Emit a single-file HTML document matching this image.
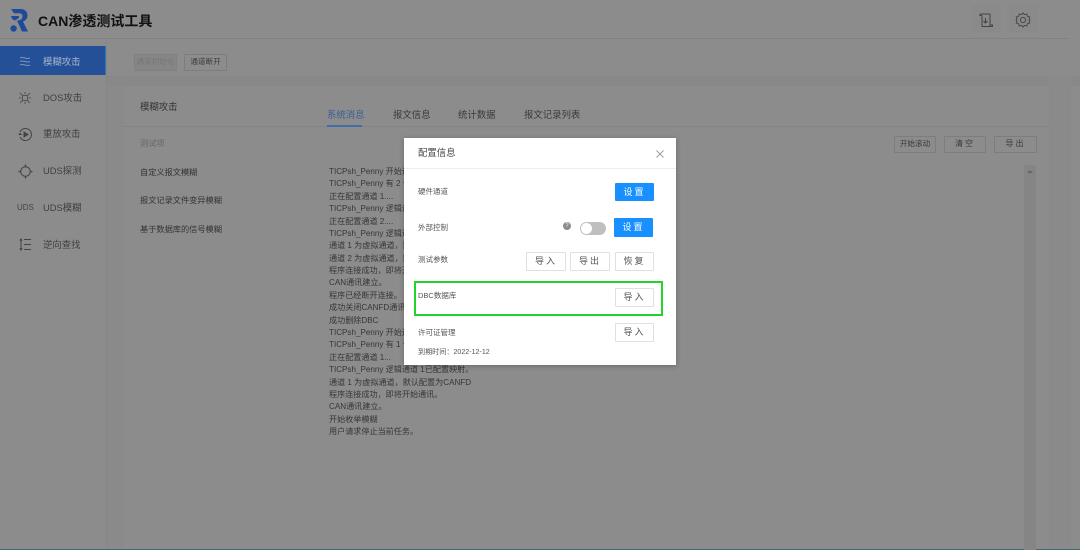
<!DOCTYPE html>
<html lang="zh"><head><meta charset="utf-8"><title>CAN渗透测试工具</title>
<style>
html,body{margin:0;padding:0}
body{width:1080px;height:550px;overflow:hidden;position:relative;background:#8c8c8c;font-family:"Liberation Sans","Noto Sans CJK SC",sans-serif;color:#3a3a3a}
div,span{position:absolute;white-space:nowrap;box-sizing:border-box}
#w{left:0;top:0;width:1080px;height:550px;filter:blur(.35px)}
.b{border:1px solid #7d7d7d;border-radius:1px;text-align:center;color:#3a3a3a;font-size:8px;line-height:14px;height:17px}
.nav{left:43px;font-size:9.4px;line-height:14px;color:#3f3f3f}
.item{left:140px;font-size:8.2px;line-height:12px;color:#333}
.tab{top:108px;font-size:9.4px;line-height:14px;color:#3a3a3a}
.log{left:329px;font-size:8.1px;line-height:12px;color:#363636}
.lab{left:14px;font-size:7.5px;line-height:10px;color:#555}
.mb{width:39px;height:19px;background:#fff;border:1px solid #e0e0e0;border-radius:1px;font-size:9px;line-height:17px;text-align:center;color:#555;letter-spacing:2px}
.pri{background:#1890ff;border-color:#1890ff;color:#fff}
</style></head><body><div id="w">
<!-- backgrounds -->
<div style="left:0;top:38px;width:1070px;height:1px;background:#828282"></div>
<div style="left:106px;top:39px;width:1px;height:511px;background:#878787"></div>
<div style="left:107px;top:76px;width:973px;height:10px;background:#888"></div>
<div style="left:107px;top:86px;width:17px;height:464px;background:#8a8a8a"></div>
<div style="left:1049px;top:76px;width:22px;height:474px;background:#8a8a8a"></div>
<div style="left:124px;top:126px;width:925px;height:1px;background:#838383"></div>
<div style="left:0;top:549px;width:1080px;height:1px;background:#3f6a7c"></div>

<!-- logo -->
<svg style="position:absolute;left:9px;top:7px" width="20" height="26" viewBox="0 0 20 26">
<path d="M2 2H11C16.5 2 18.5 5 18.5 8.5C18.5 11.5 16.5 13.5 14 14.5L19 24.5H13L8 13.5C11.5 13.5 13.5 12 13.5 9C13.5 7 12 6.2 10 6.2H5Z" fill="#1f4a9c"/>
<path d="M2 9H9C10.5 9 10.5 11 9 11.5L6 13.5C4 13 2.5 11.5 2 9Z" fill="#1f4a9c"/>
<circle cx="4.6" cy="21.5" r="3.2" fill="#1f4a9c"/></svg>
<div style="left:38px;top:12px;font-size:14px;line-height:18px;font-weight:bold;color:#111">CAN渗透测试工具</div>

<!-- top right icons -->
<div style="left:972px;top:5px;width:29px;height:28px;background:#8a8a8a"></div>
<div style="left:1009px;top:5px;width:29px;height:28px;background:#8a8a8a"></div>
<svg style="position:absolute;left:979px;top:13px" width="15" height="15" viewBox="0 0 15 15" fill="none" stroke="#444" stroke-width="1">
<path d="M1 1H11V13.5H3V2.5M1 1V2.5H3M11 12H13.5V13.5H11M6.5 5V10M4.5 8L6.5 10L8.5 8"/></svg>
<svg style="position:absolute;left:1015px;top:12px" width="16" height="16" viewBox="0 0 16 16" fill="none" stroke="#4a4a4a" stroke-width="1">
<path d="M8 1L9.5 2.6L11.8 2.1L12.5 4.3L14.7 5L14.1 7.2L15 8L14.1 9.2L14.7 11L12.5 11.7L11.8 13.9L9.5 13.4L8 15L6.5 13.4L4.2 13.9L3.5 11.7L1.3 11L1.9 9.2L1 8L1.9 7.2L1.3 5L3.5 4.3L4.2 2.1L6.5 2.6Z"/><circle cx="8" cy="8" r="2.6"/></svg>

<!-- sidebar -->
<div style="left:0;top:46px;width:106px;height:29px;background:#245098;border-right:1px solid #2a78b8"></div>
<svg style="position:absolute;left:19px;top:56px" width="12" height="11" viewBox="0 0 12 11" fill="none" stroke="#7f93b4" stroke-width="1"><path d="M1 2Q3 1 6 2T11 2M1 5.5Q3 4.5 6 5.5T11 5.5M1 9Q3 8 6 9T11 9"/></svg>
<div class="nav" style="top:55px;color:#a9b6cc">模糊攻击</div>
<svg style="position:absolute;left:19px;top:92px" width="12" height="12" viewBox="0 0 12 12" fill="none" stroke="#555" stroke-width="1"><rect x="3.5" y="3.5" width="5" height="5"/><path d="M6 0V2.4M6 9.6V12M0 6H2.4M9.6 6H12M1 1L3.5 3.5M8.5 8.5L11 11M11 1L8.5 3.5M3.5 8.5L1 11"/></svg>
<div class="nav" style="top:91px">DOS攻击</div>
<svg style="position:absolute;left:18px;top:127px" width="15" height="15" viewBox="0 0 15 15" fill="none" stroke="#444" stroke-width="1"><path d="M2 5A6 6 0 1 1 2 10"/><path d="M0.5 7.5H4M2.5 6L1 7.5"/><path d="M6 5L10 7.5L6 10Z" fill="#444"/></svg>
<div class="nav" style="top:127px">重放攻击</div>
<svg style="position:absolute;left:18px;top:164px" width="15" height="15" viewBox="0 0 15 15" fill="none" stroke="#444" stroke-width="1"><circle cx="7.5" cy="7.5" r="4.8"/><path d="M7.5 0.5V3M7.5 12V14.5M0.5 7.5H3M12 7.5H14.5" stroke-width="1.3"/></svg>
<div class="nav" style="top:164px">UDS探测</div>
<div style="left:17px;top:203px;font-size:8px;line-height:10px;color:#444">UDS</div>
<div class="nav" style="top:201px">UDS模糊</div>
<svg style="position:absolute;left:19px;top:238px" width="12" height="13" viewBox="0 0 12 13" fill="none" stroke="#444" stroke-width="1"><path d="M5 1.5H12M5 6.5H12M5 11.5H12M2 1V12"/><path d="M0.8 2.6L2 1L3.2 2.6M0.8 10.4L2 12L3.2 10.4"/></svg>
<div class="nav" style="top:238px">逆向查找</div>

<!-- toolbar -->
<div class="b" style="left:134px;top:54px;width:43px;color:#767676;border-color:#808080;background:#868686;font-size:7.6px">通道初始化</div>
<div class="b" style="left:184px;top:54px;width:43px;font-size:7.6px">通道断开</div>

<!-- card -->
<div style="left:140px;top:100px;font-size:9.4px;line-height:14px;color:#333">模糊攻击</div>
<div class="tab" style="left:327px;color:#3b5f96">系统消息</div>
<div style="left:327px;top:125px;width:35px;height:2px;background:#3d6ea8"></div>
<div class="tab" style="left:393px">报文信息</div>
<div class="tab" style="left:458px">统计数据</div>
<div class="tab" style="left:524px">报文记录列表</div>
<div class="item" style="left:140px;top:138px;color:#666">测试项</div>
<div class="item" style="top:167px">自定义报文模糊</div>
<div class="item" style="top:195px">报文记录文件变异模糊</div>
<div class="item" style="top:224px">基于数据库的信号模糊</div>

<div class="b" style="left:894px;top:136px;width:42px;font-size:7.6px">开始滚动</div>
<div class="b" style="left:944px;top:136px;width:42px;letter-spacing:2px">清空</div>
<div class="b" style="left:994px;top:136px;width:43px;letter-spacing:2px">导出</div>

<!-- scrollbar -->
<div style="left:1024px;top:165px;width:12px;height:385px;background:#858585"></div>
<div style="left:1027px;top:170px;width:0;height:0;border:3px solid transparent;border-bottom:3px solid #666;border-top:0"></div>

<!-- log -->
<div class="log" style="top:166px">TICPsh_Penny 开始运行</div>
<div class="log" style="top:178.4px">TICPsh_Penny 有 2 个通道</div>
<div class="log" style="top:190.8px">正在配置通道 1....</div>
<div class="log" style="top:203.1px">TICPsh_Penny 逻辑通道</div>
<div class="log" style="top:215.5px">正在配置通道 2....</div>
<div class="log" style="top:227.9px">TICPsh_Penny 逻辑通道</div>
<div class="log" style="top:240.3px">通道 1 为虚拟通道&#xFF0C;默认</div>
<div class="log" style="top:252.7px">通道 2 为虚拟通道&#xFF0C;默认</div>
<div class="log" style="top:265px">程序连接成功&#xFF0C;即将开始</div>
<div class="log" style="top:277.4px">CAN通讯建立。</div>
<div class="log" style="top:289.8px">程序已经断开连接。</div>
<div class="log" style="top:302.2px">成功关闭CANFD通讯</div>
<div class="log" style="top:314.6px">成功删除DBC</div>
<div class="log" style="top:326.9px">TICPsh_Penny 开始运行</div>
<div class="log" style="top:339.3px">TICPsh_Penny 有 1 个通道</div>
<div class="log" style="top:351.7px">正在配置通道 1...</div>
<div class="log" style="top:364.1px">TICPsh_Penny 逻辑通道 1已配置映射。</div>
<div class="log" style="top:376.5px">通道 1 为虚拟通道&#xFF0C;默认配置为CANFD</div>
<div class="log" style="top:388.8px">程序连接成功&#xFF0C;即将开始通讯。</div>
<div class="log" style="top:401.2px">CAN通讯建立。</div>
<div class="log" style="top:413.6px">开始枚举模糊</div>
<div class="log" style="top:426px">用户请求停止当前任务。</div>

<!-- modal -->
<div style="left:404px;top:138px;width:272px;height:227px;background:#fff;box-shadow:0 1px 5px rgba(0,0,0,.25)">
  <div style="left:14px;top:8px;font-size:9.4px;line-height:13px;color:#444">配置信息</div>
  <svg style="position:absolute;left:252px;top:12px" width="8" height="8" viewBox="0 0 8 8" stroke="#999" stroke-width=".9" fill="none"><path d="M.5 .5L7.5 7.5M7.5 .5L.5 7.5"/></svg>
  <div style="left:0;top:30px;width:272px;height:1px;background:#eee"></div>

  <div class="lab" style="top:49px">硬件通道</div>
  <div class="mb pri" style="left:211px;top:45px;height:18px;line-height:16px">设置</div>

  <div class="lab" style="top:85px">外部控制</div>
  <div style="left:159px;top:84px;width:8px;height:8px;border-radius:50%;background:#8c8c8c;color:#fff;font-size:6px;line-height:8px;text-align:center">?</div>
  <div style="left:176px;top:84px;width:26px;height:13px;border-radius:7px;background:#bfbfbf"></div>
  <div style="left:177px;top:85px;width:11px;height:11px;border-radius:50%;background:#fff"></div>
  <div class="mb pri" style="left:210px;top:80px">设置</div>

  <div class="lab" style="top:117px">测试参数</div>
  <div class="mb" style="left:122px;top:114px;width:40px">导入</div>
  <div class="mb" style="left:166px;top:114px;width:40px">导出</div>
  <div class="mb" style="left:211px;top:114px">恢复</div>

  <div style="left:10px;top:143px;width:249px;height:35px;border:2px solid #22d32a"></div>
  <div class="lab" style="top:153px">DBC数据库</div>
  <div class="mb" style="left:211px;top:150px">导入</div>

  <div class="lab" style="top:190px">许可证管理</div>
  <div class="mb" style="left:211px;top:185px">导入</div>
  <div class="lab" style="top:209px;font-size:7.1px">到期时间&#xFF1A;2022-12-12</div>
</div>
</div></body></html>
